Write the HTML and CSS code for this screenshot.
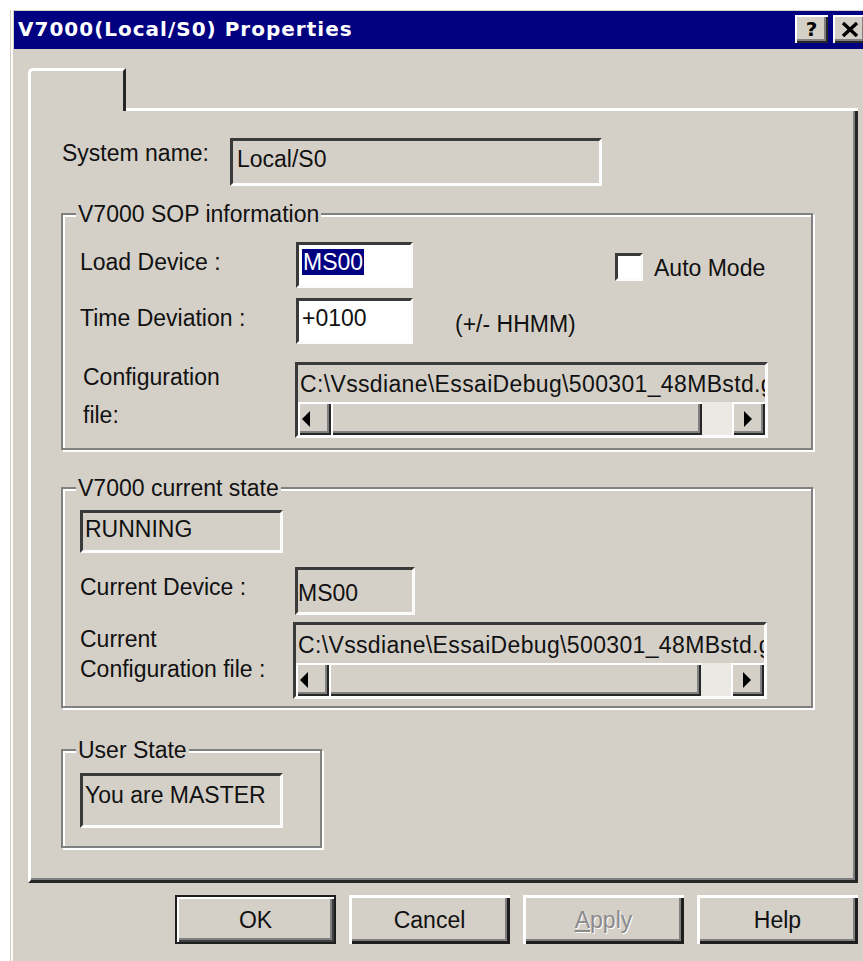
FILE: index.html
```html
<!DOCTYPE html>
<html lang="en">
<head>
<meta charset="utf-8">
<title>V7000(Local/S0) Properties</title>
<link rel="stylesheet" href="styles.css">
</head>
<body>
<div class="window">
  <div class="titlebar">
    <span class="title">V7000(Local/S0) Properties</span>
    <div class="caption-buttons">
      <span class="cap-btn raised">?</span>
      <span class="cap-btn raised">
        <svg width="18" height="15" viewBox="0 0 18 15"><path d="M2 1L16 14M16 1L2 14" stroke="#000" stroke-width="3.4"/></svg>
      </span>
    </div>
  </div>

  <div class="client">
    <div class="tabstrip">
      <div class="tab"></div>
      <div class="tab-rest"></div>
    </div>

    <div class="panel">
      <div class="sys-row">
        <span class="lbl sys-lbl">System name:</span>
        <div class="field sys-field">Local/S0</div>
      </div>

      <fieldset class="group sop">
        <legend>V7000 SOP information</legend>
        <div class="group-body">
          <div class="row load-row">
            <span class="lbl col-lbl">Load Device :</span>
            <div class="field edit small"><span class="sel">MS00</span></div>
            <span class="checkbox"></span>
            <span class="lbl check-lbl">Auto Mode</span>
          </div>
          <div class="row time-row">
            <span class="lbl col-lbl">Time Deviation :</span>
            <div class="field edit small">+0100</div>
            <span class="lbl hint">(+/- HHMM)</span>
          </div>
          <div class="row cfg-row">
            <span class="lbl cfg-lbl">Configuration<br>file:</span>
            <div class="field scrollbox sop-box">
              <div class="sb-text">C:\Vssdiane\EssaiDebug\500301_48MBstd.gen</div>
              <div class="scrollbar">
                <span class="sb-btn sb-left raised"><svg width="9" height="16" viewBox="0 0 9 16"><path d="M8 0V16L0 8Z" fill="#000"/></svg></span>
                <span class="sb-thumb raised thumb-sop"></span>
                <span class="sb-track"></span>
                <span class="sb-btn sb-right raised"><svg width="9" height="16" viewBox="0 0 9 16"><path d="M1 0V16L9 8Z" fill="#000"/></svg></span>
              </div>
            </div>
          </div>
        </div>
      </fieldset>

      <fieldset class="group state">
        <legend>V7000 current state</legend>
        <div class="group-body">
          <div class="field running">RUNNING</div>
          <div class="row dev-row">
            <span class="lbl dev-lbl">Current Device :</span>
            <div class="field dev-field">MS00</div>
          </div>
          <div class="row cur-row">
            <span class="lbl cur-lbl">Current<br>Configuration file :</span>
            <div class="field scrollbox state-box">
              <div class="sb-text sb-text-state">C:\Vssdiane\EssaiDebug\500301_48MBstd.gen</div>
              <div class="scrollbar">
                <span class="sb-btn sb-left raised"><svg width="9" height="16" viewBox="0 0 9 16"><path d="M8 0V16L0 8Z" fill="#000"/></svg></span>
                <span class="sb-thumb raised thumb-state"></span>
                <span class="sb-track"></span>
                <span class="sb-btn sb-right raised"><svg width="9" height="16" viewBox="0 0 9 16"><path d="M1 0V16L9 8Z" fill="#000"/></svg></span>
              </div>
            </div>
          </div>
        </div>
      </fieldset>

      <fieldset class="group user">
        <legend>User State</legend>
        <div class="group-body">
          <div class="field user-field">You are MASTER</div>
        </div>
      </fieldset>
    </div>

    <div class="buttons">
      <span class="btn btn-default">OK</span>
      <span class="btn">Cancel</span>
      <span class="btn btn-disabled"><u>A</u>pply</span>
      <span class="btn">Help</span>
    </div>
  </div>
</div>
</body>
</html>
```

FILE: styles.css
```css
* { box-sizing: border-box; }

html, body { margin: 0; padding: 0; }

body {
  width: 863px;
  height: 961px;
  overflow: hidden;
  background: #fff;
  font-family: "Liberation Sans", Arial, sans-serif;
  font-size: 23px;
  line-height: 26px;
  color: #111;
}

/* dialog frame */
.window {
  margin: 10px 0 0 10px;
  width: 858px;
  height: 951px;
  padding: 1px 0 0 4px;
  background: linear-gradient(to right, #d4d0c8 1px, #fbfbfa 1px, #fbfbfa 3px, #d4d0c8 3px);
}

.titlebar {
  display: flex;
  align-items: center;
  height: 38px;
  padding: 0 2px 2px 4px;
  background: #000080;
}

.title {
  color: #fff;
  font-family: "DejaVu Sans", sans-serif;
  font-weight: 700;
  font-size: 20px;
  line-height: 24px;
  letter-spacing: 1px;
  white-space: nowrap;
}

.caption-buttons {
  margin-left: auto;
  display: flex;
  gap: 5px;
}

.cap-btn {
  width: 33px;
  height: 28px;
  display: flex;
  align-items: center;
  justify-content: center;
  background: #d4d0c8;
  color: #000;
  font-family: "DejaVu Sans", sans-serif;
  font-weight: 700;
  font-size: 20px;
  line-height: 20px;
}

/* 3D bevels */
.raised {
  box-shadow: inset 2px 2px 0 #fff, inset -2px -2px 0 #262626, inset -4px -4px 0 #808080;
}

.field {
  border: 3px solid;
  border-color: #3a3a3a #fcfcfc #fcfcfc #3a3a3a;
  background: #d4d0c8;
  white-space: nowrap;
  overflow: hidden;
}

.edit { background: #fff; }

/* property sheet */
.client { padding: 19px 0 0 14px; }

.tabstrip {
  display: flex;
  width: 830px;
  height: 43px;
}

.tab {
  width: 98px;
  border-top: 3px solid #fff;
  border-left: 3px solid #fff;
  border-right: 3px solid #262626;
  border-top-left-radius: 5px;
}

.tab-rest {
  flex: 1;
  border-bottom: 3px solid #fff;
}

.panel {
  display: flow-root;
  width: 830px;
  height: 772px;
  padding-left: 30px;
  border-left: 3px solid #fff;
  border-right: 3px solid #262626;
  border-bottom: 3px solid #262626;
  box-shadow: inset -2px -2px 0 #808080;
}

.lbl { white-space: nowrap; }

.sys-row {
  display: flex;
  margin-top: 27px;
}

.sys-lbl {
  width: 169px;
  padding-left: 1px;
  margin-top: 2px;
}

.sys-field {
  width: 372px;
  height: 48px;
  padding: 5px 0 0 4px;
}

/* group boxes */
.group {
  margin: 0;
  padding: 0;
  min-width: 0;
  border: 2px solid #808080;
  box-shadow: 2px 2px 0 #fff, inset 2px 2px 0 #fff;
}

.group legend {
  margin-left: 13px;
  padding: 0 2px;
  line-height: 26px;
  background: #d4d0c8;
  white-space: nowrap;
}

.group-body { padding-left: 17px; }

.sop {
  width: 752px;
  margin-top: 15px;
  padding-bottom: 10px;
}

.state {
  width: 752px;
  margin-top: 25px;
  padding-bottom: 7px;
}

.user {
  width: 261px;
  margin-top: 29px;
  padding-bottom: 18px;
}

.row {
  display: flex;
  align-items: flex-start;
}

.load-row { margin-top: 15px; }
.time-row { margin-top: 10px; }
.cfg-row { margin-top: 18px; }

.col-lbl {
  width: 216px;
  margin-top: 7px;
}

.small {
  width: 117px;
  height: 46px;
  padding: 4px 0 0 3px;
}

.sel {
  background: #000080;
  color: #fff;
  padding: 0 1px;
}

.checkbox {
  width: 28px;
  height: 28px;
  margin: 11px 0 0 202px;
  border: 3px solid;
  border-color: #3a3a3a #fcfcfc #fcfcfc #3a3a3a;
  background: #fff;
}

.check-lbl { margin: 13px 0 0 11px; }
.hint { margin: 13px 0 0 42px; }

.cfg-lbl {
  width: 215px;
  padding-left: 3px;
  line-height: 38px;
  margin-top: -4px;
}

/* read-only text with horizontal scrollbar */
.scrollbox {
  display: flex;
  flex-direction: column;
}

.sop-box {
  width: 473px;
  height: 76px;
}

.state-box {
  width: 474px;
  height: 77px;
}

.sb-text {
  height: 37px;
  flex: none;
  padding: 6px 0 0 2px;
  letter-spacing: 0.35px;
  overflow: hidden;
  white-space: nowrap;
}

.sb-text-state {
  height: 38px;
  padding-top: 7px;
}

.scrollbar {
  display: flex;
  height: 33px;
  flex: none;
}

.sb-btn {
  width: 33px;
  flex: none;
  display: flex;
  align-items: center;
  background: #d4d0c8;
}

.sb-left svg { margin-left: 4px; }
.sb-right svg { margin-left: 11px; }

.sb-thumb {
  flex: none;
  background: #d4d0c8;
}

.thumb-sop { width: 371px; }
.thumb-state { width: 372px; }

.sb-track {
  flex: 1;
  background: #ebe9e4;
}

.running {
  width: 203px;
  height: 43px;
  margin-top: 9px;
  padding: 3px 0 0 2px;
}

.dev-row { margin-top: 14px; }

.dev-lbl {
  width: 215px;
  margin-top: 7px;
}

.dev-field {
  width: 120px;
  height: 48px;
  padding: 10px 0 0 0;
}

.cur-row { margin-top: 7px; }

.cur-lbl {
  width: 213px;
  line-height: 30px;
  margin-top: 2px;
}

.user-field {
  width: 203px;
  height: 55px;
  margin-top: 10px;
  padding: 6px 0 0 2px;
}

/* dialog buttons */
.buttons {
  display: flex;
  justify-content: flex-end;
  gap: 13px;
  width: 830px;
  margin-top: 12px;
}

.btn {
  width: 161px;
  height: 49px;
  display: flex;
  align-items: center;
  justify-content: center;
  background: #d4d0c8;
  box-shadow: inset 3px 3px 0 #fff, inset -3px -3px 0 #1e1e1e, inset -5px -5px 0 #808080;
}

.btn-default {
  border: 2px solid #1e1e1e;
  box-shadow: inset 2px 2px 0 #fff, inset -2px -2px 0 #404040, inset -4px -4px 0 #808080;
}

.btn-disabled {
  color: #8a8a8a;
  text-shadow: 1px 1px 0 #fff;
}
```
